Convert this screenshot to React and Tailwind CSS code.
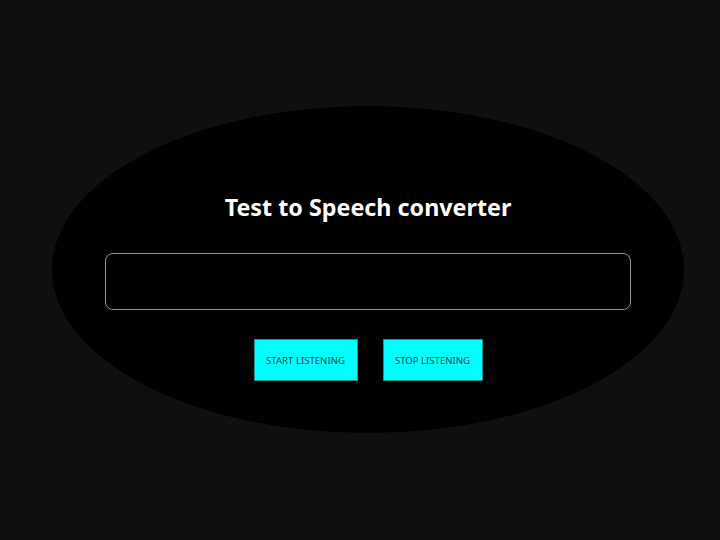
export default function App() {
  return (
    <div className="w-[720px] h-[540px] bg-[#0f0f0f] flex justify-center pl-[16px] overflow-hidden" style={{ fontFamily: '"Segoe UI", "Noto Sans", sans-serif' }}>
      <div className="mt-[106px] w-[632px] h-[327px] rounded-[50%] bg-black flex flex-col items-center">
        <h1 className="mt-[85px] text-white font-bold text-[23.3px] leading-[32px]">Test to Speech converter</h1>
        <div className="mt-[30px] w-[526px] h-[57px] rounded-[8px] border border-[#959595] bg-black"></div>
        <div className="mt-[29px] flex gap-[25px]">
          <button className="w-[104px] h-[42px] pt-[3px] bg-[#00ffff] border border-[#1f8f8f] text-[#1a3f44] text-[9.6px]">START LISTENING</button>
          <button className="w-[100px] h-[42px] pt-[3px] bg-[#00ffff] border border-[#1f8f8f] text-[#1a3f44] text-[9.6px]">STOP LISTENING</button>
        </div>
      </div>
    </div>
  );
}
